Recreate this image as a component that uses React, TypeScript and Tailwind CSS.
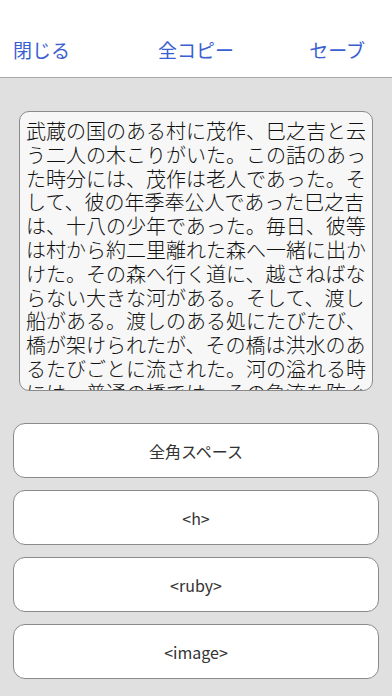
import React from "react";

const lines = [
  "武蔵の国のある村に茂作、巳之吉と云",
  "う二人の木こりがいた。この話のあっ",
  "た時分には、茂作は老人であった。そ",
  "して、彼の年季奉公人であった巳之吉",
  "は、十八の少年であった。毎日、彼等",
  "は村から約二里離れた森へ一緒に出か",
  "けた。その森へ行く道に、越さねばな",
  "らない大きな河がある。そして、渡し",
  "船がある。渡しのある処にたびたび、",
  "橋が架けられたが、その橋は洪水のあ",
  "るたびごとに流された。河の溢れる時",
  "には、普通の橋では、その急流を防ぐ",
  "事はできない。",
];

const buttons = ["全角スペース", "<h>", "<ruby>", "<image>"];

export default function App() {
  return (
    <div
      className="w-[392px] h-[696px] bg-[#e0e0e0] overflow-hidden flex flex-col"
      style={{ fontFamily: '"Noto Sans CJK JP", "Noto Sans", sans-serif' }}
    >
      <header className="h-[78px] bg-white border-b border-[#a8a8a8] grid grid-cols-3 items-end pb-[13px] text-[19px] text-[#3c5fcf]">
        <div className="pl-[13px] flex justify-start">
          <span>閉じる</span>
        </div>
        <div className="flex justify-center">
          <span>全コピー</span>
        </div>
        <div className="pr-[27px] flex justify-end">
          <span>セーブ</span>
        </div>
      </header>
      <main className="flex flex-col px-[13px]">
        <div className="mt-[33px] mx-[6px] h-[280px] bg-[#f7f7f7] border border-[#8a8a8a] rounded-[10px] overflow-hidden pl-[6px] pt-[7px]">
          {lines.map((l, i) => (
            <div
              key={i}
              className="whitespace-nowrap text-[20px] font-light leading-[23.8px] text-[#111]"
            >
              {l}
            </div>
          ))}
        </div>
        <div className="mt-[32px] flex flex-col gap-[12px]">
          {buttons.map((b) => (
            <div
              key={b}
              className="h-[55px] bg-white border border-[#8a8a8a] rounded-[12px] flex items-center justify-center text-[16px] text-[#333]"
            >
              {b}
            </div>
          ))}
        </div>
      </main>
    </div>
  );
}
